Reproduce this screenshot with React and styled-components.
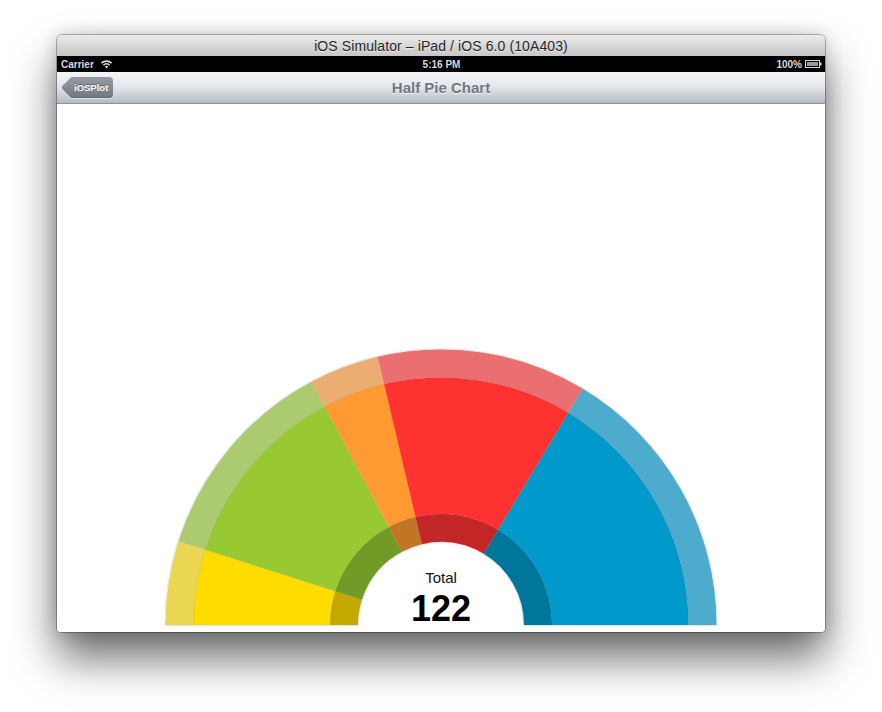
import React from 'react'
import styled, { createGlobalStyle } from 'styled-components'

const GlobalStyle = createGlobalStyle`
  html, body { margin: 0; padding: 0; background: #fff; }
  body { font-family: "Liberation Sans", Arial, sans-serif; }
`

const Stage = styled.div`
  width: 882px;
  height: 712px;
  padding: 35px 0 0 57px;
  box-sizing: border-box;
  background: #fff;
`

const Window = styled.div`
  width: 768px;
  border-radius: 5px 5px 4px 4px;
  overflow: hidden;
  background: #fff;
  box-shadow: 0 0 0 1px rgba(0,0,0,0.28), 0 26px 44px rgba(0,0,0,0.58), 0 0 18px rgba(0,0,0,0.18);
`

const TitleBar = styled.div`
  height: 21px;
  display: flex;
  align-items: center;
  justify-content: center;
  background: linear-gradient(#ececec, #d4d4d4 60%, #c6c6c6);
  font-size: 14px;
  letter-spacing: 0.1px;
  color: #262626;
  text-shadow: 0 1px 0 rgba(255,255,255,0.6);
`

const StatusBar = styled.div`
  height: 16px;
  background: #000;
  display: grid;
  grid-template-columns: 1fr auto 1fr;
  align-items: center;
  padding: 0 3px 0 4px;
  color: #d8d8d8;
  font-size: 10px;
  font-weight: 700;
`

const StatusGroup = styled.div`
  display: flex;
  align-items: center;
  gap: ${p => p.$gap || 6}px;
  justify-content: ${p => p.$end ? 'flex-end' : 'flex-start'};
`

const NavBar = styled.div`
  height: 31px;
  border-bottom: 1px solid #8c919b;
  background: linear-gradient(#f5f6f8 0%, #e6e8ec 45%, #c4c8d0 85%, #b3b8c2 100%);
  display: grid;
  grid-template-columns: 1fr auto 1fr;
  align-items: center;
  padding: 0 6px;
`

const NavTitle = styled.div`
  font-size: 15px;
  font-weight: 700;
  color: #707781;
  text-shadow: 0 1px 0 rgba(255,255,255,0.8);
`

const BackButton = styled.div`
  position: relative;
  justify-self: start;
  margin-left: 8px;
  height: 21px;
  display: flex;
  align-items: center;
  padding: 0 5px 0 3px;
  border-radius: 0 4px 4px 0;
  background: linear-gradient(#979ca4, #72787f);
  box-shadow: inset 0 -1px 0 rgba(0,0,0,0.15), 0 1px 0 rgba(255,255,255,0.5);
  color: #fff;
  font-size: 9.5px;
  font-weight: 700;
  text-shadow: 0 -1px 0 rgba(0,0,0,0.35);

  &::before {
    content: '';
    position: absolute;
    left: -7px;
    top: 3px;
    width: 15px;
    height: 15px;
    border-radius: 2px;
    transform: rotate(45deg);
    background: linear-gradient(135deg, #989da5, #72787f);
    z-index: 0;
  }

  span { position: relative; z-index: 1; }
`

const Content = styled.div`
  height: 528px;
  display: flex;
  flex-direction: column;
  justify-content: flex-end;
  align-items: center;
  padding-bottom: 5px;
  box-sizing: border-box;
  background: #fff;
`

const ChartSvg = styled.svg`
  display: block;
  overflow: visible;
`

const Slice = styled.path`
  fill: ${p => p.$fill};
`

const TotalLabel = styled.text`
  font-family: "Liberation Sans", Arial, sans-serif;
  font-size: 15px;
  fill: #111;
`

const TotalValue = styled.text`
  font-family: "Liberation Sans", Arial, sans-serif;
  font-size: 36px;
  font-weight: 700;
  fill: #000;
`

const CX = 284
const CY = 282
const R_OUT = 275.5
const R_BAND = 247.5
const R_DARK = 111
const R_IN = 83

const slices = [
  { value: 12, main: '#fedc00', outer: '#ebd652', inner: '#c3a800' },
  { value: 30, main: '#99c933', outer: '#accb6f', inner: '#729a28' },
  { value: 10, main: '#ff9933', outer: '#ebad6f', inner: '#c37428' },
  { value: 30, main: '#ff3333', outer: '#eb6e6f', inner: '#c32727' },
  { value: 40, main: '#0099cc', outer: '#4eacce', inner: '#00769d' },
]

const pt = (r, deg) => {
  const a = (deg * Math.PI) / 180
  return [CX - r * Math.cos(a), CY - r * Math.sin(a)]
}

const sector = (r0, r1, a0, a1) => {
  const [x0, y0] = pt(r1, a0)
  const [x1, y1] = pt(r1, a1)
  const [x2, y2] = pt(r0, a1)
  const [x3, y3] = pt(r0, a0)
  return `M${x0} ${y0} A${r1} ${r1} 0 0 1 ${x1} ${y1} L${x2} ${y2} A${r0} ${r0} 0 0 0 ${x3} ${y3} Z`
}

function WifiIcon() {
  return (
    <svg width="13" height="10" viewBox="0 0 13 10">
      <path d="M0.8 3.6 A8 8 0 0 1 12.2 3.6 L11 4.8 A6.3 6.3 0 0 0 2 4.8 Z" fill="#d8d8d8" />
      <path d="M2.8 5.6 A5.2 5.2 0 0 1 10.2 5.6 L9 6.8 A3.5 3.5 0 0 0 4 6.8 Z" fill="#d8d8d8" />
      <path d="M4.8 7.6 A2.4 2.4 0 0 1 8.2 7.6 L6.5 9.4 Z" fill="#d8d8d8" />
    </svg>
  )
}

function BatteryIcon() {
  return (
    <svg width="17" height="8" viewBox="0 0 17 8">
      <rect x="0.5" y="0.5" width="14" height="7" fill="none" stroke="#d8d8d8" />
      <rect x="2" y="2" width="11" height="4" fill="#9a9a9a" />
      <rect x="15" y="2.5" width="1.5" height="3" fill="#d8d8d8" />
    </svg>
  )
}

function HalfPie() {
  const total = slices.reduce((s, d) => s + d.value, 0)
  let acc = 0
  const parts = slices.map(d => {
    const a0 = (acc / total) * 180
    acc += d.value
    const a1 = (acc / total) * 180
    return { ...d, a0, a1 }
  })

  return (
    <ChartSvg width="568" height="284" viewBox="0 0 568 284">
      <defs>
        <filter id="edge" x="-5%" y="-5%" width="110%" height="110%">
          <feDropShadow dx="0" dy="0" stdDeviation="1.2" floodColor="#000" floodOpacity="0.3" />
        </filter>
      </defs>
      <g filter="url(#edge)">
        {parts.map((p, i) => (
          <g key={i}>
            <Slice d={sector(R_DARK, R_BAND, p.a0, p.a1)} $fill={p.main} />
            <Slice d={sector(R_BAND, R_OUT, p.a0, p.a1)} $fill={p.outer} />
            <Slice d={sector(R_IN, R_DARK, p.a0, p.a1)} $fill={p.inner} />
          </g>
        ))}
      </g>
      <path
        d={`M${CX - R_BAND} ${CY} A${R_BAND} ${R_BAND} 0 0 1 ${CX + R_BAND} ${CY}`}
        fill="none"
        stroke="rgba(0,0,0,0.06)"
        strokeWidth="1"
      />
      <TotalLabel x={CX} y="240" textAnchor="middle">Total</TotalLabel>
      <TotalValue x={CX} y="278" textAnchor="middle">{total}</TotalValue>
    </ChartSvg>
  )
}

export default function App() {
  return (
    <>
      <GlobalStyle />
      <Stage>
        <Window>
          <TitleBar>iOS Simulator – iPad / iOS 6.0 (10A403)</TitleBar>
          <StatusBar>
            <StatusGroup>
              <span>Carrier</span>
              <WifiIcon />
            </StatusGroup>
            <span>5:16 PM</span>
            <StatusGroup $end $gap={3}>
              <span>100%</span>
              <BatteryIcon />
            </StatusGroup>
          </StatusBar>
          <NavBar>
            <BackButton><span>iOSPlot</span></BackButton>
            <NavTitle>Half Pie Chart</NavTitle>
            <div />
          </NavBar>
          <Content>
            <HalfPie />
          </Content>
        </Window>
      </Stage>
    </>
  )
}
